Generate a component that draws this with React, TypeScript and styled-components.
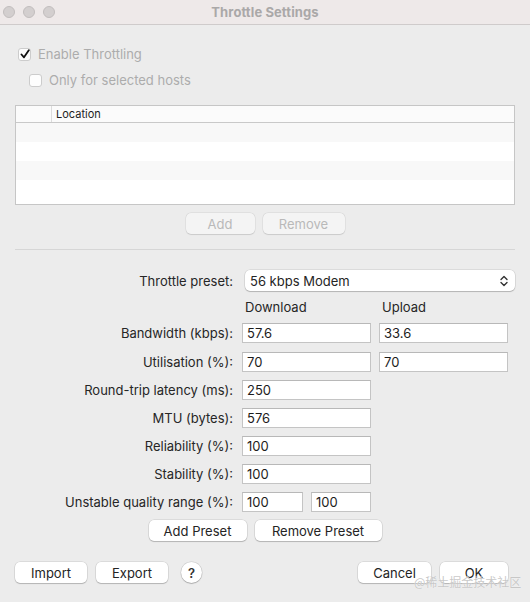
import React from 'react';
import styled, { createGlobalStyle } from 'styled-components';

const GlobalStyle = createGlobalStyle`
  html, body {
    margin: 0;
    padding: 0;
    background: #ececec;
  }
  body {
    font-family: "Inter", "Noto Sans", "Liberation Sans", "Noto Sans CJK SC", sans-serif;
    font-size: 13px;
    color: #242424;
  }
  * {
    box-sizing: border-box;
  }
`;

const ChevronIcon: React.FC = () => (
  <svg width="8" height="12" viewBox="0 0 8 12" fill="none">
    <path d="M1 4.5 L4 1.5 L7 4.5" stroke="#333" strokeWidth="1.4" strokeLinecap="round" strokeLinejoin="round" />
    <path d="M1 7.5 L4 10.5 L7 7.5" stroke="#333" strokeWidth="1.4" strokeLinecap="round" strokeLinejoin="round" />
  </svg>
);

const CheckIcon: React.FC = () => (
  <svg width="10" height="10" viewBox="0 0 10 10" fill="none">
    <path d="M1.5 5.5 L4 8.3 L8.8 1.2" stroke="#111" strokeWidth="1.8" strokeLinecap="round" strokeLinejoin="round" />
  </svg>
);

const rows = [
  { label: 'Round-trip latency (ms):', value: '250' },
  { label: 'MTU (bytes):', value: '576' },
  { label: 'Reliability (%):', value: '100' },
  { label: 'Stability (%):', value: '100' },
];

const tableRows = [0, 1, 2, 3];

const App: React.FC = () => {
  return (
    <>
      <GlobalStyle />
      <Window>
        <TitleBar>
          <Lights>
            <Light />
            <Light />
            <Light />
          </Lights>
          <Title>Throttle Settings</Title>
          <span />
        </TitleBar>

        <Content>
          <CheckRow indent={0} top={20}>
            <Box checked>
              <CheckIcon />
            </Box>
            <CheckLabel>Enable Throttling</CheckLabel>
          </CheckRow>
          <CheckRow indent={11} top={8}>
            <Box />
            <CheckLabel>Only for selected hosts</CheckLabel>
          </CheckRow>

          <Table>
            <TableHeader>
              <HeaderCell width={35} />
              <HeaderCell>Location</HeaderCell>
            </TableHeader>
            {tableRows.map((r) => (
              <TableRow key={r} striped={r % 2 === 0} />
            ))}
          </Table>

          <CenterRow top={8}>
            <PushButton disabled width={69}>Add</PushButton>
            <PushButton disabled width={82}>Remove</PushButton>
          </CenterRow>

          <Separator />

          <Form>
            <FormRow height={21} top={0}>
              <FieldLabel>Throttle preset:</FieldLabel>
              <Select>
                <span>56 kbps Modem</span>
                <ChevronIcon />
              </Select>
            </FormRow>

            <FormRow height={20} top={6}>
              <FieldLabel />
              <ColumnHead>Download</ColumnHead>
              <ColumnHead>Upload</ColumnHead>
            </FormRow>

            <FormRow height={20} top={6}>
              <FieldLabel>Bandwidth (kbps):</FieldLabel>
              <TextField width={129} defaultValue="57.6" />
              <TextField width={129} defaultValue="33.6" />
            </FormRow>

            <FormRow height={20} top={9}>
              <FieldLabel>Utilisation (%):</FieldLabel>
              <TextField width={129} defaultValue="70" />
              <TextField width={129} defaultValue="70" />
            </FormRow>

            {rows.map((row) => (
              <FormRow key={row.label} height={20} top={8}>
                <FieldLabel>{row.label}</FieldLabel>
                <TextField width={129} defaultValue={row.value} />
              </FormRow>
            ))}

            <FormRow height={20} top={8}>
              <FieldLabel>Unstable quality range (%):</FieldLabel>
              <TextField width={61} defaultValue="100" />
              <TextField width={60} defaultValue="100" />
            </FormRow>
          </Form>

          <CenterRow top={8}>
            <PushButton width={98}>Add Preset</PushButton>
            <PushButton width={127}>Remove Preset</PushButton>
          </CenterRow>

          <BottomBar>
            <ButtonGroup>
              <PushButton width={72}>Import</PushButton>
              <PushButton width={72}>Export</PushButton>
              <HelpButton>?</HelpButton>
            </ButtonGroup>
            <ButtonGroup>
              <PushButton width={73}>Cancel</PushButton>
              <PushButton width={68}>OK</PushButton>
            </ButtonGroup>
          </BottomBar>
        </Content>

        <Watermark>@稀土掘金技术社区</Watermark>
      </Window>
    </>
  );
};

export default App;

// Styles
const Window = styled.div`
  position: relative;
  width: 530px;
  height: 602px;
  background: #ececec;
  overflow: hidden;
`;

const TitleBar = styled.div`
  display: grid;
  grid-template-columns: 1fr auto 1fr;
  align-items: center;
  height: 25px;
  background: #eee9e9;
  border-bottom: 1px solid #cfcbcb;
  padding: 0 3px;
`;

const Lights = styled.div`
  display: flex;
  gap: 8px;
`;

const Light = styled.div`
  width: 12px;
  height: 12px;
  border-radius: 50%;
  background: #d3cfcf;
  border: 0.5px solid #c2bebe;
`;

const Title = styled.div`
  font-weight: 700;
  font-size: 13px;
  color: #aaa8a8;
  letter-spacing: 0.1px;
`;

const Content = styled.div`
  display: flex;
  flex-direction: column;
  padding: 0 15px;
`;

const CheckRow = styled.div<{ indent: number; top: number }>`
  display: flex;
  align-items: center;
  gap: 7px;
  height: 18px;
  margin-top: ${(p) => p.top}px;
  padding-left: ${(p) => 3 + p.indent}px;
`;

const Box = styled.div<{ checked?: boolean }>`
  width: 13px;
  height: 13px;
  border-radius: 3px;
  background: #fdfdfd;
  border: 1px solid #cccccc;
  display: flex;
  align-items: center;
  justify-content: center;
`;

const CheckLabel = styled.span`
  color: #acacac;
  font-size: 13px;
`;

const Table = styled.div`
  margin-top: 16px;
  height: 100px;
  border: 1px solid #c6c6c6;
  background: #ffffff;
  overflow: hidden;
`;

const TableHeader = styled.div`
  display: flex;
  height: 17px;
  background: #fbfbfb;
  border-bottom: 1px solid #c9c9c9;
`;

const HeaderCell = styled.div<{ width?: number }>`
  ${(p) => (p.width ? `width: ${p.width}px;` : 'flex: 1;')}
  display: flex;
  align-items: center;
  padding-left: 4px;
  font-size: 11px;
  color: #1e1e1e;
  & + & {
    border-left: 1px solid #dcdcdc;
  }
`;

const TableRow = styled.div<{ striped: boolean }>`
  height: 19px;
  background: ${(p) => (p.striped ? '#f8f8f8' : '#ffffff')};
`;

const CenterRow = styled.div<{ top: number }>`
  display: flex;
  justify-content: center;
  gap: 8px;
  margin-top: ${(p) => p.top}px;
`;

const PushButton = styled.button<{ width: number }>`
  width: ${(p) => p.width}px;
  height: 21px;
  padding: 0;
  border: none;
  border-radius: 5px;
  background: ${(p) => (p.disabled ? '#f4f4f4' : '#ffffff')};
  box-shadow: ${(p) =>
    p.disabled
      ? '0 0 0 0.5px rgba(0,0,0,0.08), 0 0.5px 1px rgba(0,0,0,0.1)'
      : '0 0 0 0.5px rgba(0,0,0,0.14), 0 1px 1px rgba(0,0,0,0.18)'};
  font-family: inherit;
  font-size: 13px;
  color: ${(p) => (p.disabled ? '#b9b9b9' : '#242424')};
`;

const HelpButton = styled.button`
  width: 21px;
  height: 21px;
  margin-left: 4px;
  padding: 0;
  border: none;
  border-radius: 50%;
  background: #ffffff;
  box-shadow: 0 0 0 0.5px rgba(0,0,0,0.14), 0 1px 1px rgba(0,0,0,0.2);
  font-family: inherit;
  font-size: 13px;
  font-weight: 600;
  color: #333;
`;

const Separator = styled.div`
  height: 1px;
  background: #d6d6d6;
  margin-top: 15px;
  margin-bottom: 20px;
`;

const Form = styled.div`
  display: flex;
  flex-direction: column;
`;

const FormRow = styled.div<{ height: number; top: number }>`
  display: flex;
  align-items: center;
  gap: 8px;
  height: ${(p) => p.height}px;
  margin-top: ${(p) => p.top}px;
`;

const FieldLabel = styled.div`
  width: 218px;
  margin-right: 1px;
  text-align: right;
  white-space: nowrap;
  color: #262626;
`;

const ColumnHead = styled.div`
  width: 129px;
  padding-left: 3px;
  color: #262626;
`;

const TextField = styled.input<{ width: number }>`
  width: ${(p) => p.width}px;
  height: 20px;
  padding: 0 0 0 4px;
  border: 1px solid #c4c4c4;
  border-top-color: #b8b8b8;
  background: #ffffff;
  font-family: inherit;
  font-size: 13px;
  color: #1c1c1c;
  outline: none;
`;

const Select = styled.div`
  flex: 1;
  height: 21px;
  margin-left: 3px;
  display: flex;
  align-items: center;
  justify-content: space-between;
  padding: 0 7px 0 5px;
  background: #ffffff;
  border-radius: 5px;
  box-shadow: 0 0 0 0.5px rgba(0,0,0,0.14), 0 1px 1px rgba(0,0,0,0.18);
  color: #242424;
`;

const BottomBar = styled.div`
  display: flex;
  justify-content: space-between;
  align-items: center;
  margin-top: 21px;
  padding-right: 7px;
`;

const ButtonGroup = styled.div`
  display: flex;
  align-items: center;
  gap: 9px;
`;

const Watermark = styled.div`
  position: absolute;
  left: 414px;
  top: 573px;
  font-size: 12px;
  color: rgba(190, 190, 190, 0.85);
  text-shadow: 0 0 1px rgba(255,255,255,0.9);
  font-family: "Noto Sans CJK SC", sans-serif;
  pointer-events: none;
`;
